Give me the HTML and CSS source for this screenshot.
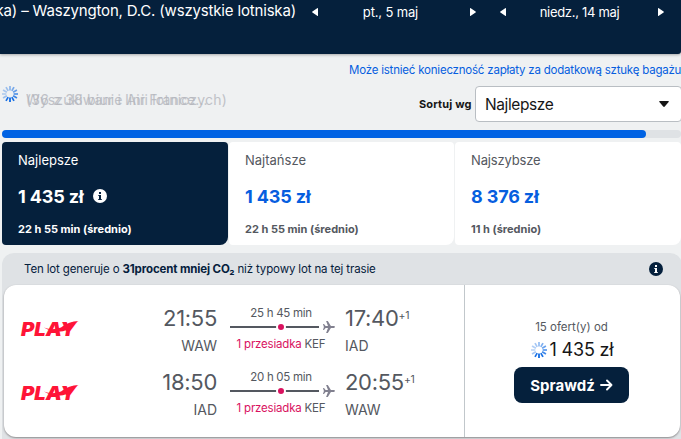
FILE: index.html
```html
<!DOCTYPE html>
<html lang="pl">
<head>
<meta charset="utf-8">
<title>Wyniki lotów</title>
<link rel="stylesheet" href="styles.css">
</head>
<body>
<svg class="defs" width="0" height="0" aria-hidden="true">
  <symbol id="spinner" viewBox="0 0 18 18">
    <g stroke="#0062e3" stroke-width="1.7">
      <path d="M9 12.6V17" opacity="1"/>
      <path d="M9 12.6V17" opacity=".9" transform="rotate(30 9 9)"/>
      <path d="M9 12.6V17" opacity=".35" transform="rotate(60 9 9)"/>
      <path d="M9 12.6V17" opacity=".25" transform="rotate(90 9 9)"/>
      <path d="M9 12.6V17" opacity=".3" transform="rotate(120 9 9)"/>
      <path d="M9 12.6V17" opacity=".35" transform="rotate(150 9 9)"/>
      <path d="M9 12.6V17" opacity=".42" transform="rotate(180 9 9)"/>
      <path d="M9 12.6V17" opacity=".5" transform="rotate(210 9 9)"/>
      <path d="M9 12.6V17" opacity=".58" transform="rotate(240 9 9)"/>
      <path d="M9 12.6V17" opacity=".65" transform="rotate(270 9 9)"/>
      <path d="M9 12.6V17" opacity=".75" transform="rotate(300 9 9)"/>
      <path d="M9 12.6V17" opacity=".9" transform="rotate(330 9 9)"/>
    </g>
  </symbol>
  <symbol id="info" viewBox="0 0 14 14">
    <circle class="disc" cx="7" cy="7" r="7"/>
    <path class="mark" d="M6 3h2v2H6zM5.3 6H8v4h.8v1H5.2v-1H6V7h-.7z"/>
  </symbol>
  <symbol id="plane" viewBox="0 0 12 12">
    <path fill="#81808f" d="M0 3h1L2.600 5.100H5L3.100 0H4.800L7.900 5.100h2.900q1.200.2 1.200.9t-1.200.9H7.900L4.800 12H3.100L5 6.900H2.600L1 9H0L.9 6z"/>
  </symbol>
  <symbol id="left" viewBox="0 0 6 8"><path fill="#fff" d="M6 .6v6.800q0 .9-.8.3L.4 4.500q-.6-.5 0-1L5.200.3Q6-.3 6 .6z"/></symbol>
  <symbol id="right" viewBox="0 0 6 8"><path fill="#fff" d="M0 .6v6.800q0 .9.8.3L5.600 4.500q.6-.5 0-1L.8.3Q0-.3 0 .6z"/></symbol>
  <symbol id="play" viewBox="0 0 60 18">
    <text class="play-word" x="1" y="15.800" textLength="55" lengthAdjust="spacingAndGlyphs">PLAY</text>
    <path fill="#ff1437" d="M24 7.500q8 3.500 17 0Q49 1.200 58.500 1 54 3 49.500 7.500q-4 4-9 4-9.500.500-16.500-4z"/>
  </symbol>
</svg>

<header class="topbar">
  <div class="route">ka) – Waszyngton, D.C. (wszystkie lotniska)</div>
  <div class="day day-out">
    <svg width="6" height="8"><use href="#left"/></svg>
    <span class="date date-out">pt., 5 maj</span>
    <svg width="6" height="8"><use href="#right"/></svg>
  </div>
  <div class="day day-back">
    <svg width="6" height="8"><use href="#left"/></svg>
    <span class="date date-back">niedz., 14 maj</span>
    <svg width="6" height="8"><use href="#right"/></svg>
  </div>
</header>

<div class="notice"><a>Może istnieć konieczność zapłaty za dodatkową sztukę bagażu</a></div>

<div class="toolbar">
  <svg class="spin" width="18" height="18"><use href="#spinner"/></svg>
  <div class="status">
    <span class="st-a">Wyszukiwanie Air France...</span>
    <span class="st-b">(36 z 38 biur i linii lotniczych)</span>
  </div>
  <label class="sort-label">Sortuj wg</label>
  <div class="select"><span>Najlepsze</span><svg width="10" height="6"><path d="M.8 0h8.400q1 .2.4 1L5.800 5.500q-.8.8-1.600 0L.4 1Q-.2.2.8 0z" fill="#161616"/></svg></div>
</div>

<div class="progress"><div class="bar"></div></div>

<nav class="tabs">
  <div class="tab active">
    <div class="name">Najlepsze</div>
    <div class="price">1 435 zł<svg class="info light" width="14" height="14"><use href="#info"/></svg></div>
    <div class="dur">22 h 55 min (średnio)</div>
  </div>
  <div class="tab">
    <div class="name">Najtańsze</div>
    <div class="price">1 435 zł</div>
    <div class="dur">22 h 55 min (średnio)</div>
  </div>
  <div class="tab">
    <div class="name tight">Najszybsze</div>
    <div class="price">8 376 zł</div>
    <div class="dur">11 h (średnio)</div>
  </div>
</nav>

<section class="ticket">
  <div class="eco">
    <div class="eco-text">Ten lot generuje o <b>31procent mniej CO₂</b> niż typowy lot na tej trasie</div>
    <svg class="info dark" width="14" height="14"><use href="#info"/></svg>
  </div>
  <div class="card">
    <div class="legs">
      <div class="leg">
        <svg class="logo" width="60" height="18"><use href="#play"/></svg>
        <div class="point from"><div class="time">21:55</div><div class="code">WAW</div></div>
        <div class="path">
          <div class="len">25 h 45 min</div>
          <div class="track"><div class="line"><i></i></div><svg width="12" height="12"><use href="#plane"/></svg></div>
          <div class="stops"><span>1 przesiadka</span> KEF</div>
        </div>
        <div class="point"><div class="time">17:40<sup>+1</sup></div><div class="code">IAD</div></div>
      </div>
      <div class="leg">
        <svg class="logo" width="60" height="18"><use href="#play"/></svg>
        <div class="point from"><div class="time">18:50</div><div class="code">IAD</div></div>
        <div class="path">
          <div class="len">20 h 05 min</div>
          <div class="track"><div class="line"><i></i></div><svg width="12" height="12"><use href="#plane"/></svg></div>
          <div class="stops"><span>1 przesiadka</span> KEF</div>
        </div>
        <div class="point"><div class="time">20:55<sup>+1</sup></div><div class="code">WAW</div></div>
      </div>
    </div>
    <div class="offer">
      <div class="count">15 ofert(y) od</div>
      <div class="total"><svg width="18" height="18"><use href="#spinner"/></svg><span>1 435 zł</span></div>
      <div class="button"><span>Sprawdź</span><svg width="13" height="12" fill="none" stroke="#fff" stroke-width="1.900" stroke-linecap="round" stroke-linejoin="round"><path d="M1 6h10.500M7 1.500 11.500 6 7 10.500"/></svg></div>
    </div>
  </div>
</section>
</body>
</html>
```
FILE: styles.css
```css
* { box-sizing: border-box; }
body {
  margin: 0;
  width: 681px;
  height: 439px;
  overflow: hidden;
  background: #eff1f2;
  color: #161616;
  font-family: Inter, "Liberation Sans", sans-serif;
  white-space: nowrap;
}
svg { display: block; flex: none; }
.defs { position: absolute; }

.topbar {
  height: 54px;
  background: #05203c;
  color: #fff;
  display: flex;
  box-shadow: 0 1px 3px rgba(0, 0, 0, .3);
  border-bottom-right-radius: 3px;
}
.route {
  width: 296px;
  display: flex;
  justify-content: flex-end;
  font-size: 15px;
  line-height: 22px;
  letter-spacing: -.17px;
}
.day { display: flex; align-items: center; justify-content: space-between; height: 24px; }
.day-out { margin-left: 16px; width: 164px; }
.day-back { margin-left: 24px; width: 164px; }
.date { font-size: 13px; line-height: 25px; padding-top: 1px; }
.date-out { letter-spacing: -.15px; padding-right: 7px; }
.date-back { letter-spacing: -.3px; padding-right: 5px; }

.notice {
  height: 30px;
  display: flex;
  padding-left: 349px;
  font-size: 11.5px;
  line-height: 32px;
  letter-spacing: -.21px;
  color: #065edf;
}

.toolbar { display: flex; height: 39px; padding-left: 1px; }
.spin { margin-top: 1px; }
.status {
  display: grid;
  flex: none;
  width: 400px;
  padding-left: 7px;
  font-size: 14px;
  line-height: 31px;
  color: #b4b6bd;
}
.status span { grid-area: 1 / 1; opacity: .8; }
.st-a { letter-spacing: .1px; }
.st-b { letter-spacing: .2px; }
.sort-label {
  flex: none;
  width: 56px;
  font-size: 11px;
  font-weight: 700;
  line-height: 40px;
  letter-spacing: .15px;
}
.select {
  width: 207px;
  height: 36px;
  margin-top: 2px;
  flex: none;
  display: flex;
  align-items: center;
  justify-content: space-between;
  padding: 0 12px 0 9px;
  background: #fff;
  border: 1px solid #b9bec3;
  border-radius: 4px;
  font-size: 15.5px;
  letter-spacing: -.4px;
}

.progress { height: 8px; margin: 7px 0 4px 2px; background: #dfe2e5; border-radius: 4px; }
.bar { width: 644px; height: 8px; border-radius: 4px; background: #0062e3; }

.tabs { display: grid; grid-template-columns: 226px 225px 226px; gap: 1px; margin-left: 2px; height: 103px; }
.tab { background: #fff; border-radius: 4px 4px 8px 4px; padding: 9px 0 0 16px; color: #545860; }
.tab.active { background: #05203c; color: #fff; }
.name { font-size: 13px; line-height: 18px; }
.tight { letter-spacing: -.15px; }
.price {
  display: flex;
  align-items: center;
  margin-top: 14px;
  height: 26px;
  font-size: 18px;
  font-weight: 700;
  letter-spacing: -.15px;
  color: #065edf;
}
.active .price { color: #fff; }
.price .info { margin-left: 9px; }
.dur { margin-top: 13px; font-size: 11px; font-weight: 700; line-height: 15px; }

.info { flex: none; }
.light { color: #05203c; fill: #fff; }
.dark { color: #fff; fill: #05203c; }
.mark { fill: currentColor; }

.ticket { margin: 8px -1px 0 2px; padding: 0 2px; height: 190px; background: #dfe2e5; border-radius: 12px 12px 0 0; }
.eco { display: flex; justify-content: space-between; align-items: center; height: 32px; padding: 0 17px 0 20px; font-size: 11.5px; color: #05203c; }
.eco-text { letter-spacing: -.14px; }
.card {
  display: flex;
  width: 676px;
  height: 152px;
  background: #fff;
  border-radius: 12px;
  box-shadow: 0 1px 2px rgba(37, 32, 31, .45);
}
.legs { width: 461px; border-right: 1px solid #c1c7cb; padding-top: 20px; }
.leg { display: flex; height: 64px; color: #545860; }
.logo { margin: 15px 0 0 16px; }
.point { width: 90px; }
.point.from { width: 137px; text-align: right; }
.time { font-size: 22px; line-height: 27px; height: 28px; letter-spacing: -.3px; }
.time sup { font-size: 10.5px; line-height: 0; vertical-align: 7px; }
.code { font-size: 14px; line-height: 25px; }
.path { width: 105px; margin: 0 10px 0 13px; }
.len { width: 102px; font-size: 11.5px; line-height: 17px; letter-spacing: -.3px; text-align: center; }
.track { display: flex; align-items: center; justify-content: space-between; height: 8px; margin-top: 1px; }
.line { width: 89px; height: 2px; background: #545860; display: flex; align-items: center; justify-content: center; }
.line i { flex: none; width: 10px; height: 10px; margin-left: 12px; border-radius: 50%; background: #d9125f; border: 2px solid #fff; }
.stops { width: 102px; font-size: 11.5px; line-height: 18px; margin-top: 4px; letter-spacing: -.2px; text-align: center; }
.stops span { color: #d9125f; }
.play-word { font: italic 900 19px Inter, "Liberation Sans", sans-serif; fill: #ff1437; }

.offer { flex: 1; display: flex; flex-direction: column; align-items: center; padding: 34px 2px 0 0; }
.count { font-size: 11.5px; line-height: 17px; color: #545860; }
.total { display: flex; align-items: center; height: 27px; font-size: 18px; gap: 2px; letter-spacing: -.2px; }
.button {
  display: flex;
  align-items: center;
  justify-content: center;
  gap: 5px;
  width: 115px;
  height: 36px;
  margin-top: 4px;
  border-radius: 8px;
  background: #05203c;
  color: #fff;
  font-size: 15px;
  font-weight: 700;
}
```
